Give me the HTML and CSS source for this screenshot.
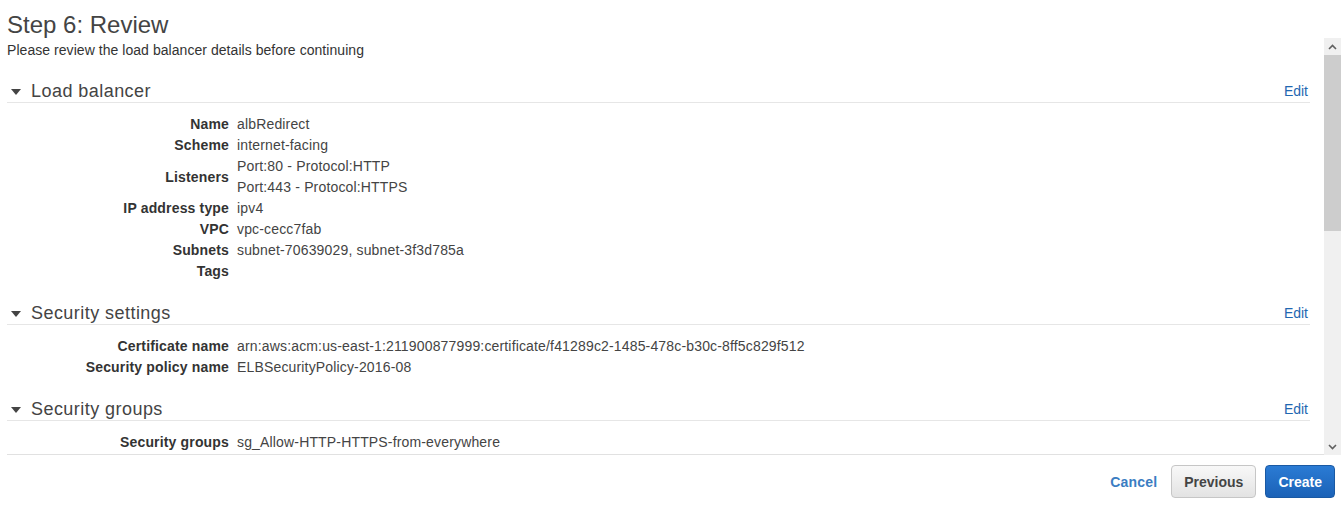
FILE: index.html
```html
<!DOCTYPE html>
<html lang="en">
<head>
    <meta charset="UTF-8">
    <meta name="viewport" content="width=device-width, initial-scale=1.0">
    <title>Step 6: Review</title>
    <link rel="stylesheet" href="styles.css">
</head>
<body>
    <h1 class="page-title">Step 6: Review</h1>
    <div class="review-panel">
        <div class="review-scroll">
            <p class="intro">Please review the load balancer details before continuing</p>

            <div class="section">
                <div class="section-header">
                    <span class="caret"></span>
                    <h2>Load balancer</h2>
                    <a class="edit-link" href="#">Edit</a>
                </div>
                <dl class="details">
                    <dt>Name</dt><dd>albRedirect</dd>
                    <dt>Scheme</dt><dd>internet-facing</dd>
                    <dt>Listeners</dt><dd>Port:80 - Protocol:HTTP<br>Port:443 - Protocol:HTTPS</dd>
                    <dt>IP address type</dt><dd>ipv4</dd>
                    <dt>VPC</dt><dd>vpc-cecc7fab</dd>
                    <dt>Subnets</dt><dd>subnet-70639029, subnet-3f3d785a</dd>
                    <dt>Tags</dt><dd></dd>
                </dl>
            </div>

            <div class="section">
                <div class="section-header">
                    <span class="caret"></span>
                    <h2>Security settings</h2>
                    <a class="edit-link" href="#">Edit</a>
                </div>
                <dl class="details">
                    <dt>Certificate name</dt><dd>arn:aws:acm:us-east-1:211900877999:certificate/f41289c2-1485-478c-b30c-8ff5c829f512</dd>
                    <dt>Security policy name</dt><dd>ELBSecurityPolicy-2016-08</dd>
                </dl>
            </div>

            <div class="section">
                <div class="section-header">
                    <span class="caret"></span>
                    <h2>Security groups</h2>
                    <a class="edit-link" href="#">Edit</a>
                </div>
                <dl class="details">
                    <dt>Security groups</dt><dd>sg_Allow-HTTP-HTTPS-from-everywhere</dd>
                </dl>
            </div>
        </div>
        <div class="scrollbar">
            <div class="scroll-btn">
                <svg width="9" height="6" viewBox="0 0 9 6"><path d="M1 5 L4.5 1.5 L8 5" fill="none" stroke="#606060" stroke-width="1.6"/></svg>
            </div>
            <div class="scroll-thumb"></div>
            <div class="scroll-track"></div>
            <div class="scroll-btn">
                <svg width="9" height="6" viewBox="0 0 9 6"><path d="M1 1 L4.5 4.5 L8 1" fill="none" stroke="#606060" stroke-width="1.6"/></svg>
            </div>
        </div>
    </div>
    <div class="actions">
        <a class="cancel-link" href="#">Cancel</a>
        <button class="btn btn-default">Previous</button>
        <button class="btn btn-primary">Create</button>
    </div>
</body>
</html>
```
FILE: styles.css
```css
body { font-family: "Liberation Sans", Arial, sans-serif; margin: 0; padding: 0 0 0 7px; background: #fff; color: #444; font-size: 14px; }
.page-title { font-size: 24px; font-weight: normal; line-height: 27px; margin: 0; padding-top: 11px; color: #444; }

.review-panel { display: flex; height: 417px; }
.review-scroll { flex: 1; overflow: hidden; padding-right: 14px; border-bottom: 1px solid #e1e1e1; }
.intro { margin: 4px 0 0; font-size: 14px; line-height: 16px; color: #333; letter-spacing: 0.05px; }

.section { margin-top: 20px; }
.section:first-of-type { margin-top: 22px; }
.section-header { display: flex; align-items: center; height: 22px; border-bottom: 1px solid #e6e6e6; }
.caret { width: 0; height: 0; margin: 1px 10px 0 4px; border-left: 5px solid transparent; border-right: 5px solid transparent; border-top: 6px solid #444; }
.section-header h2 { flex: 1; margin: 0; font-size: 18px; font-weight: normal; line-height: 22px; color: #444; letter-spacing: 0.45px; }
.edit-link { font-size: 14px; color: #1f67b1; text-decoration: none; margin-right: 2px; line-height: 22px; }

.details { display: grid; grid-template-columns: 222px 1fr; column-gap: 8px; margin: 11px 0 0; line-height: 21px; letter-spacing: 0.16px; }
.details dt { text-align: right; font-weight: bold; color: #333; align-self: center; }
.details dd { margin: 0; color: #444; min-height: 21px; }

.scrollbar { width: 17px; display: flex; flex-direction: column; background: #f0f0f0; }
.scroll-btn { height: 17px; display: flex; align-items: center; justify-content: center; }
.scroll-thumb { height: 176px; background: #cdcdcd; }
.scroll-track { flex: 1; }

.actions { display: flex; justify-content: flex-end; align-items: center; padding: 10px 6px 0 0; }
.cancel-link { font-weight: bold; color: #3a7dc2; text-decoration: none; margin-right: 14px; font-size: 14px; letter-spacing: 0.2px; }
.btn { font-family: "Liberation Sans", Arial, sans-serif; font-size: 14px; font-weight: bold; height: 33px; border-radius: 4px; cursor: pointer; }
.btn-default { padding: 0 12px; color: #444; background: linear-gradient(#f8f8f8, #e3e3e3); border: 1px solid #c6c6c6; margin-right: 9px; }
.btn-primary { padding: 0 12px; color: #fff; background: linear-gradient(#2b7bd4, #1b62b7); border: 1px solid #1a59a3; }
```
